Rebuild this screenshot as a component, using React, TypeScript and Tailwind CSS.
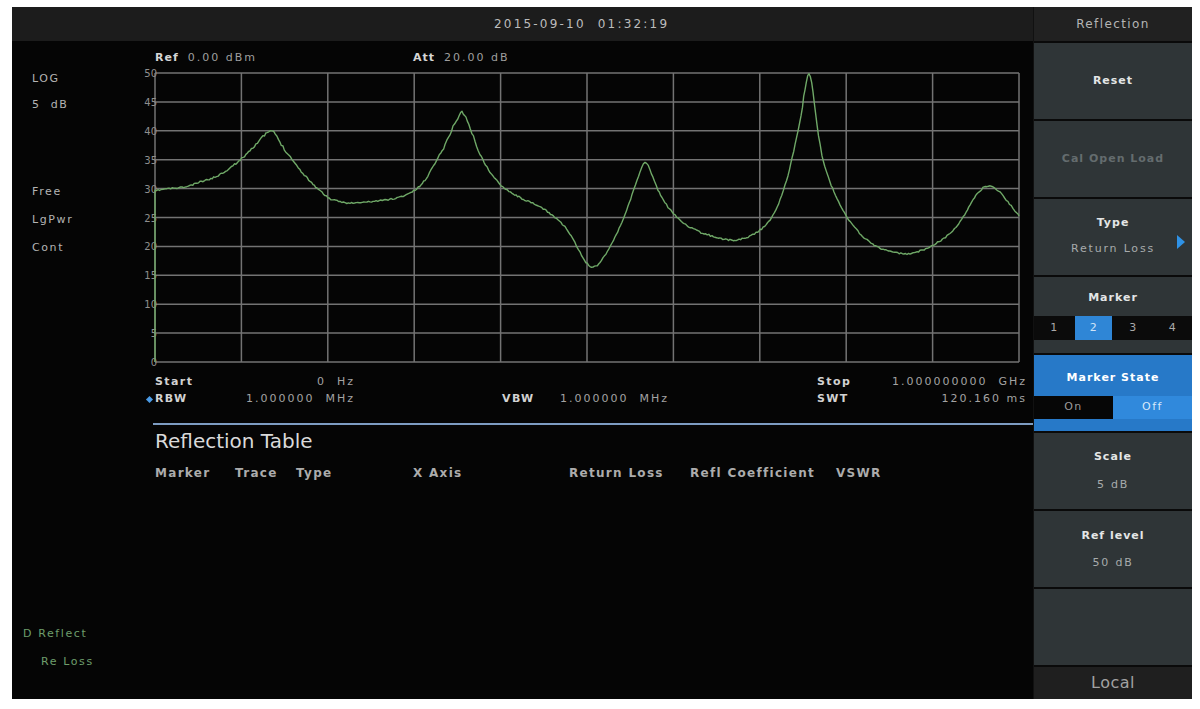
import React from "react";

// trace points in page coordinates (x, y)
const TRACE_PTS: [number, number][] = [
  [155, 191], [165, 189], [185, 187], [200, 182], [215, 177], [227, 170], [240, 160], [250, 150],
  [260, 140], [267, 133], [272, 131], [277, 137], [283, 147], [292, 159], [300, 170], [310, 181],
  [317, 188], [325, 195], [333, 200], [350, 203], [367, 202], [385, 200], [400, 197], [415, 190],
  [425, 180], [435, 163], [445, 145], [453, 127], [459, 116], [462, 112], [466, 118], [472, 133],
  [480, 154], [490, 172], [500, 184], [512, 193], [525, 200], [540, 207], [552, 215], [565, 227],
  [575, 243], [583, 258], [590, 266], [596, 266], [603, 258], [612, 243], [622, 222], [632, 195],
  [640, 172], [645, 162], [650, 170], [658, 190], [668, 207], [680, 220], [695, 230], [712, 236],
  [730, 240], [745, 238], [760, 230], [770, 220], [780, 200], [788, 175], [795, 145], [801, 115],
  [805, 90], [809, 74], [813, 92], [817, 125], [822, 155], [830, 182], [843, 210], [855, 228],
  [867, 240], [880, 248], [893, 252], [907, 254], [920, 251], [933, 245], [947, 236], [960, 222],
  [970, 205], [977, 194], [983, 188], [987, 186], [992, 187], [1000, 192], [1008, 202], [1019, 216],
];

const OX = 137;
const OY = 66;
const GX0 = 18;
const GX1 = 882;
const GY0 = 7;
const GY1 = 296;

function tracePoints() {
  const p = TRACE_PTS.map(([x, y]) => [x - OX, y - OY]);
  let seed = 11;
  const rnd = () => {
    seed = (seed * 16807) % 2147483647;
    return seed / 2147483647 - 0.5;
  };
  const out: string[] = [`${GX0},${GY1}`];
  for (let i = 0; i < p.length - 1; i++) {
    const p0 = p[Math.max(0, i - 1)];
    const p1 = p[i];
    const p2 = p[i + 1];
    const p3 = p[Math.min(p.length - 1, i + 2)];
    const n = Math.max(2, Math.round((p2[0] - p1[0]) / 1.5));
    for (let s = 0; s < n; s++) {
      const t = s / n;
      const t2 = t * t;
      const t3 = t2 * t;
      const cr = (a: number, b: number, c: number, d: number) =>
        0.5 * (2 * b + (-a + c) * t + (2 * a - 5 * b + 4 * c - d) * t2 + (-a + 3 * b - 3 * c + d) * t3);
      const x = cr(p0[0], p1[0], p2[0], p3[0]);
      let y = cr(p0[1], p1[1], p2[1], p3[1]);
      const amp = y < 90 ? 2.6 : 1.6;
      y = Math.max(GY0, y + rnd() * amp);
      out.push(`${x.toFixed(1)},${y.toFixed(1)}`);
    }
  }
  const last = p[p.length - 1];
  out.push(`${last[0]},${last[1]}`);
  return out.join(" ");
}

const TRACE = tracePoints();
const Y_LABELS = ["50", "45", "40", "35", "30", "25", "20", "15", "10", "5", "0"];

function Chart() {
  const cols = Array.from({ length: 11 }, (_, i) => GX0 + (i * (GX1 - GX0)) / 10);
  const rows = Array.from({ length: 11 }, (_, i) => GY0 + (i * (GY1 - GY0)) / 10);
  return (
    <svg width={890} height={300} viewBox="0 0 890 300" className="block shrink-0 overflow-visible">
      {rows.map((y, i) => (
        <line key={`h${i}`} x1={GX0} x2={GX1} y1={y} y2={y} stroke="#737373" strokeWidth={1.5} />
      ))}
      {cols.map((x, i) => (
        <line key={`v${i}`} x1={x} x2={x} y1={GY0} y2={GY1} stroke="#737373" strokeWidth={1.5} />
      ))}
      {rows.map((y, i) => (
        <text
          key={`t${i}`}
          x={GX0 + 2}
          y={y + 4}
          textAnchor="end"
          fontSize={10}
          fill="#8f8f8f"
          fontFamily="DejaVu Sans, sans-serif"
        >
          {Y_LABELS[i]}
        </text>
      ))}
      <polyline points={TRACE} fill="none" stroke="#6fa867" strokeWidth={1.4} strokeLinejoin="round" />
    </svg>
  );
}

function Softkey({ children, className = "" }: { children?: React.ReactNode; className?: string }) {
  return (
    <div className={`relative h-[76px] shrink-0 flex flex-col items-center ${className}`}>
      {children}
    </div>
  );
}

const title = "text-[11px] leading-[16px] font-bold tracking-[1px]";
const sub = "text-[11px] leading-[16px] tracking-[1.8px] text-[#a7abac]";
const val = "text-[11px] leading-[16px] tracking-[2px] text-[#a3a3a3] whitespace-pre";
const lab = "text-[11px] leading-[16px] font-bold tracking-[1.4px] text-[#d2d2d2]";

export default function App() {
  return (
    <div className="w-[1200px] h-[709px] bg-white pl-[12px] pr-[8px] pt-[7px] pb-[10px] overflow-hidden font-['DejaVu_Sans',sans-serif]">
      <div className="flex h-full bg-[#050505]">
        {/* main screen */}
        <div className="flex-1 min-w-0 flex flex-col">
          <div className="h-[34px] shrink-0 bg-[#1c1c1c] flex items-center pl-[482px]">
            <span className="text-[12px] tracking-[2.2px] text-[#bcbcbc] whitespace-pre">2015-09-10  01:32:19</span>
          </div>

          <div className="flex-1 flex min-h-0">
            {/* left status column */}
            <div className="w-[125px] shrink-0 flex flex-col justify-between pt-[31px] pb-[30px]">
              <div className="flex flex-col pl-[20px] text-[11px] leading-[14px] tracking-[1.6px] text-[#b4b4b4]">
                <span>LOG</span>
                <span className="mt-[12px] whitespace-pre">5  dB</span>
                <span className="mt-[73px]">Free</span>
                <span className="mt-[14px]">LgPwr</span>
                <span className="mt-[14px]">Cont</span>
              </div>
              <div className="flex flex-col text-[11px] leading-[14px] tracking-[1.6px] text-[#6e9e6c]">
                <span className="pl-[11px]">D Reflect</span>
                <span className="pl-[29px] mt-[14px]">Re Loss</span>
              </div>
            </div>

            {/* content */}
            <div className="flex-1 min-w-0 flex flex-col">
              <div className="h-[25px] pt-[10px] pl-[18px] flex text-[11px] leading-[14px]">
                <div className="w-[258px] flex gap-[9px]">
                  <span className="font-bold tracking-[1px] text-[#d6d6d6]">Ref</span>
                  <span className="tracking-[2px] text-[#9f9f9f]">0.00 dBm</span>
                </div>
                <div className="flex gap-[9px]">
                  <span className="font-bold tracking-[1px] text-[#d6d6d6]">Att</span>
                  <span className="tracking-[2px] text-[#9f9f9f]">20.00 dB</span>
                </div>
              </div>

              <Chart />

              <div className="pt-[8px] flex flex-col">
                <div className="flex items-center h-[16px]">
                  <div className="w-[18px]" />
                  <div className={`w-[87px] ${lab}`}>Start</div>
                  <div className={`w-[113px] text-right ${val}`}>0  Hz</div>
                  <div className="w-[462px]" />
                  <div className={`w-[72px] ${lab}`}>Stop</div>
                  <div className={`w-[138px] text-right ${val}`}>1.000000000  GHz</div>
                </div>
                <div className="flex items-center h-[16px] mt-[1px]">
                  <div className="w-[18px] flex justify-end pr-[3px]">
                    <div className="w-[5px] h-[5px] rotate-45 bg-[#4b9be6]" />
                  </div>
                  <div className={`w-[87px] ${lab}`}>RBW</div>
                  <div className={`w-[113px] text-right ${val}`}>1.000000  MHz</div>
                  <div className="w-[147px]" />
                  <div className={`w-[58px] ${lab}`}>VBW</div>
                  <div className={`w-[257px] ${val}`}>1.000000  MHz</div>
                  <div className={`w-[72px] ${lab}`}>SWT</div>
                  <div className={`w-[138px] text-right ${val}`}>120.160 ms</div>
                </div>
              </div>

              <div className="ml-[16px] mt-[16px] h-[2px] bg-[#7d9cc2]" />

              <div className="pl-[18px] mt-[4px] text-[20px] leading-[24px] text-[#dadada]">Reflection Table</div>

              <div className="pl-[18px] mt-[12px] flex text-[12px] leading-[16px] font-bold tracking-[1.3px] text-[#acacac]">
                <span className="w-[80px]">Marker</span>
                <span className="w-[61px]">Trace</span>
                <span className="w-[117px]">Type</span>
                <span className="w-[156px]">X Axis</span>
                <span className="w-[121px]">Return Loss</span>
                <span className="w-[146px]">Refl Coefficient</span>
                <span>VSWR</span>
              </div>
            </div>
          </div>
        </div>

        {/* softkey panel */}
        <div className="w-[159px] shrink-0 flex flex-col gap-[2px] bg-[#0a0a0a] border-l border-[#111]">
          <div className="h-[34px] shrink-0 bg-[#212121] flex items-center justify-center">
            <span className="text-[12px] tracking-[1.4px] text-[#b5b5b5]">Reflection</span>
          </div>
          <Softkey className="bg-[#2f3537] justify-center">
            <span className={`${title} text-[#e4e6e6]`}>Reset</span>
          </Softkey>
          <Softkey className="bg-[#2f3537] justify-center">
            <span className={`${title} text-[#646c6e]`}>Cal Open Load</span>
          </Softkey>
          <Softkey className="bg-[#2f3537] pt-[16px]">
            <span className={`${title} text-[#e4e6e6]`}>Type</span>
            <span className={`${sub} mt-[10px]`}>Return Loss</span>
            <svg width="8" height="14" viewBox="0 0 8 14" className="absolute right-[7px] top-[36px]">
              <polygon points="0,0 8,7 0,14" fill="#2f92e6" />
            </svg>
          </Softkey>
          <Softkey className="bg-[#2f3537] pt-[13px]">
            <span className={`${title} text-[#e4e6e6]`}>Marker</span>
            <div className="mt-[10px] w-full h-[24px] bg-[#0b0b0b] grid grid-cols-4 items-center text-[11px] text-[#a9a9a9]">
              <span className="text-center">1</span>
              <span className="h-full mx-[1px] bg-[#2f86d6] text-[#cfe4f8] flex items-center justify-center">2</span>
              <span className="text-center">3</span>
              <span className="text-center">4</span>
            </div>
          </Softkey>
          <Softkey className="bg-[#2779c8] pt-[15px]">
            <span className={`${title} text-white`}>Marker State</span>
            <div className="mt-[10px] w-full h-[23px] flex text-[11px] tracking-[1.5px]">
              <span className="w-1/2 bg-[#060606] text-[#9a9a9a] flex items-center justify-center">On</span>
              <span className="w-1/2 bg-[#3089dc] text-[#d6e8fa] flex items-center justify-center">Off</span>
            </div>
          </Softkey>
          <Softkey className="bg-[#2f3537] pt-[16px]">
            <span className={`${title} text-[#e4e6e6]`}>Scale</span>
            <span className={`${sub} mt-[12px]`}>5 dB</span>
          </Softkey>
          <Softkey className="bg-[#2f3537] pt-[17px]">
            <span className={`${title} text-[#e4e6e6]`}>Ref level</span>
            <span className={`${sub} mt-[11px]`}>50 dB</span>
          </Softkey>
          <Softkey className="bg-[#2f3537]" />
          <div className="flex-1 bg-[#1f1f1f] flex items-center justify-center">
            <span className="text-[16px] tracking-[0.5px] text-[#a2a2a2]">Local</span>
          </div>
        </div>
      </div>
    </div>
  );
}
